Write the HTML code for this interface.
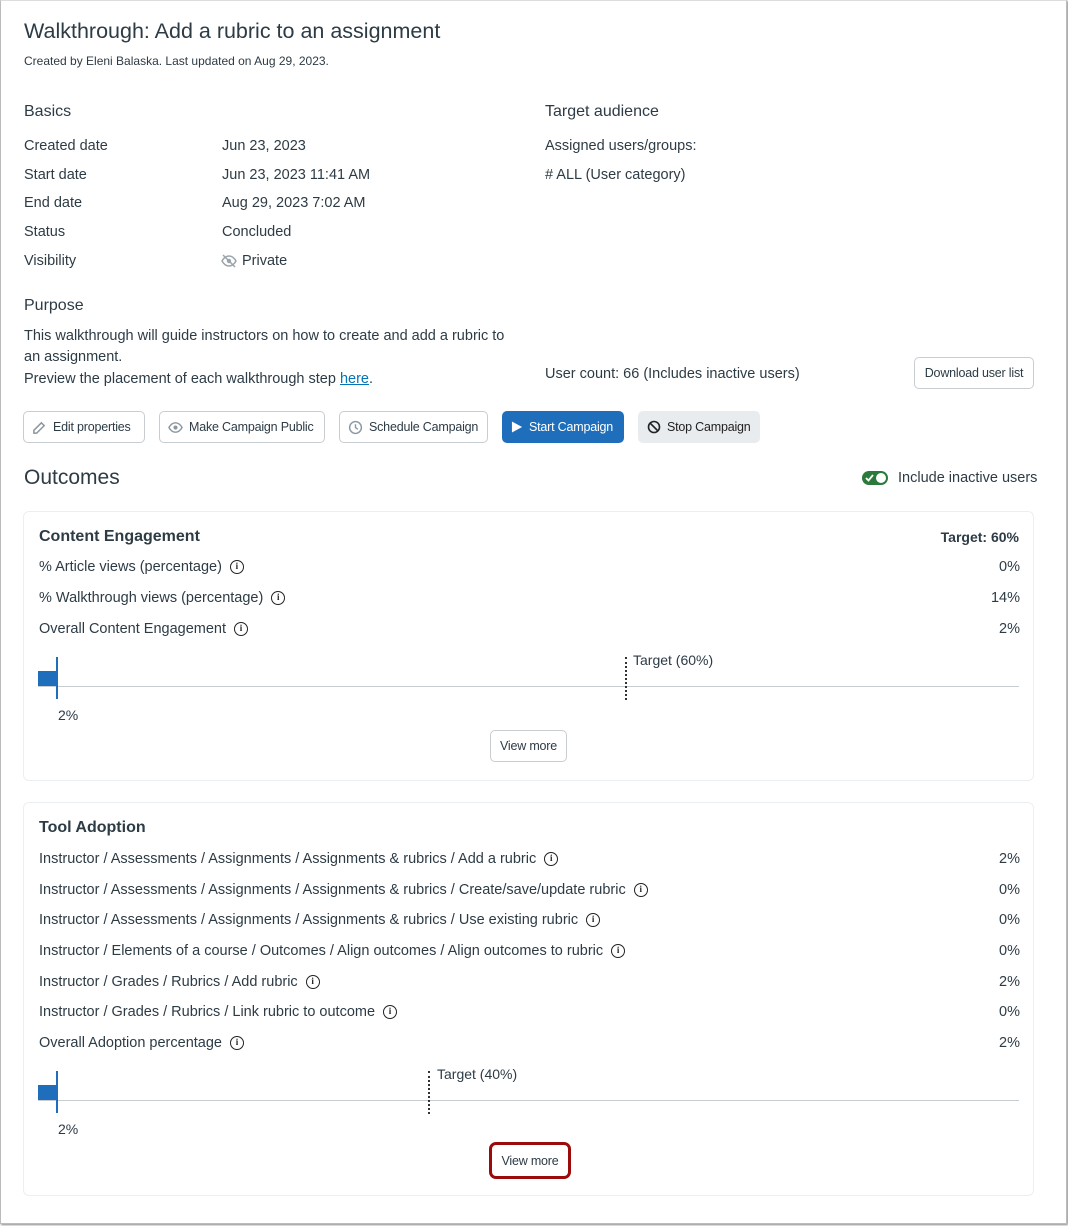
<!DOCTYPE html>
<html><head><meta charset="utf-8">
<style>
*{box-sizing:border-box;margin:0;padding:0}
body{width:1068px;height:1226px;background:#fff;font-family:"Liberation Sans",sans-serif;color:#2d3b45;position:relative;overflow:hidden}
.frame{position:absolute;left:0;top:0;width:1067px;height:1224px;border:1px solid #bbb;border-top:1px solid #ddd;box-shadow:1px 1px 2px #888}
.a{position:absolute;white-space:nowrap;line-height:1}
.t{font-size:14.5px}
.btn{position:absolute;height:32px;border:1px solid #c7cdd1;border-radius:5px;background:#fff;font-size:12.5px;letter-spacing:-0.2px;display:flex;align-items:center;padding:0 8px;gap:6px;white-space:nowrap}
.btn svg{flex-shrink:0;display:block}
.card{position:absolute;left:23px;width:1011px;border:1px solid #eceff1;border-radius:6px}
.info{display:inline-block;width:14px;height:14px;border:1.5px solid #222;border-radius:50%;font-size:9px;font-weight:bold;text-align:center;line-height:11px;margin-left:8px;vertical-align:top;margin-top:0px;font-family:"Liberation Serif",serif;color:#222}
.r{right:48px;text-align:right}
</style></head><body>
<div class="frame"></div>
<div class="a" style="left:24px;top:21px;font-size:21.5px">Walkthrough: Add a rubric to an assignment</div>
<div class="a" style="left:24px;top:55px;font-size:12px">Created by Eleni Balaska. Last updated on Aug 29, 2023.</div>

<div class="a" style="left:24px;top:104px;font-size:16px">Basics</div>
<div class="a t" style="left:24px;top:139px">Created date</div><div class="a t" style="left:222px;top:139px">Jun 23, 2023</div>
<div class="a t" style="left:24px;top:168px">Start date</div><div class="a t" style="left:222px;top:168px">Jun 23, 2023 11:41 AM</div>
<div class="a t" style="left:24px;top:196px">End date</div><div class="a t" style="left:222px;top:196px">Aug 29, 2023 7:02 AM</div>
<div class="a t" style="left:24px;top:225px">Status</div><div class="a t" style="left:222px;top:225px">Concluded</div>
<div class="a t" style="left:24px;top:254px">Visibility</div>
<svg class="a" style="left:221px;top:253px" width="16" height="16" viewBox="0 0 16 16"><path d="M1 8c2-3.5 4.5-5 7-5s5 1.5 7 5c-2 3.5-4.5 5-7 5s-5-1.5-7-5z" fill="none" stroke="#9aa4ab" stroke-width="1.5"/><circle cx="8" cy="8" r="2.2" fill="#9aa4ab"/><path d="M2 2l12 12" stroke="#9aa4ab" stroke-width="1.5"/></svg>
<div class="a t" style="left:242px;top:254px">Private</div>

<div class="a" style="left:545px;top:104px;font-size:16px">Target audience</div>
<div class="a t" style="left:545px;top:139px">Assigned users/groups:</div>
<div class="a t" style="left:545px;top:168px"># ALL (User category)</div>

<div class="a" style="left:24px;top:298px;font-size:16px">Purpose</div>
<div class="a t" style="left:24px;top:329px">This walkthrough will guide instructors on how to create and add a rubric to</div>
<div class="a t" style="left:24px;top:350px">an assignment.</div>
<div class="a t" style="left:24px;top:372px">Preview the placement of each walkthrough step <span style="color:#0374b5;text-decoration:underline">here</span>.</div>
<div class="a t" style="left:545px;top:367px">User count: 66 (Includes inactive users)</div>
<div class="btn" style="left:914px;top:357px;width:120px;justify-content:center;padding:0">Download user list</div>

<div class="btn" style="left:23px;top:411px;width:122px"><svg width="15" height="15" viewBox="0 0 16 16"><path d="M2 11l8-8 3 3-8 8H2z" fill="none" stroke="#8b969e" stroke-width="1.6"/></svg>Edit properties</div>
<div class="btn" style="left:159px;top:411px;width:166px"><svg width="15" height="15" viewBox="0 0 16 16"><path d="M1 8c2-3.5 4.5-5 7-5s5 1.5 7 5c-2 3.5-4.5 5-7 5s-5-1.5-7-5z" fill="none" stroke="#8b969e" stroke-width="1.5"/><circle cx="8" cy="8" r="2.2" fill="#8b969e"/></svg>Make Campaign Public</div>
<div class="btn" style="left:339px;top:411px;width:149px"><svg width="15" height="15" viewBox="0 0 16 16"><circle cx="8" cy="8" r="6.3" fill="none" stroke="#8b969e" stroke-width="1.5"/><path d="M8 4.5V8l2.5 2" fill="none" stroke="#8b969e" stroke-width="1.5"/></svg>Schedule Campaign</div>
<div class="btn" style="left:502px;top:411px;width:122px;background:#1e6ebc;border-color:#1e6ebc;color:#fff"><svg width="12" height="14" viewBox="0 0 13 14"><path d="M1 1l11 6-11 6z" fill="#fff"/></svg>Start Campaign</div>
<div class="btn" style="left:638px;top:411px;width:122px;background:#e8ecef;border-color:#e8ecef;color:#222"><svg width="14" height="14" viewBox="0 0 14 14"><circle cx="7" cy="7" r="5.5" fill="none" stroke="#222" stroke-width="1.6"/><path d="M3 3l8 8" stroke="#222" stroke-width="1.6"/></svg>Stop Campaign</div>

<div class="a" style="left:24px;top:467px;font-size:21px">Outcomes</div>
<div class="a" style="left:862px;top:471px;width:26px;height:14px;border-radius:7px;background:#2b7a3b"><div style="position:absolute;right:2px;top:2px;width:10px;height:10px;border-radius:50%;background:#fff"></div><svg style="position:absolute;left:3px;top:3px" width="9" height="8" viewBox="0 0 9 8"><path d="M1 4l2.5 2.5L8 1" fill="none" stroke="#fff" stroke-width="1.8"/></svg></div>
<div class="a t" style="left:898px;top:471px">Include inactive users</div>

<div class="card" style="top:511px;height:270px"></div>
<div class="a" style="left:39px;top:529px;font-size:16px;font-weight:bold">Content Engagement</div>
<div class="a t" style="right:49px;top:530px;font-weight:bold;font-size:14px">Target: 60%</div>
<div class="a t" style="left:39px;top:560px">% Article views (percentage)<span class="info">i</span></div><div class="a t r" style="top:560px">0%</div>
<div class="a t" style="left:39px;top:591px">% Walkthrough views (percentage)<span class="info">i</span></div><div class="a t r" style="top:591px">14%</div>
<div class="a t" style="left:39px;top:622px">Overall Content Engagement<span class="info">i</span></div><div class="a t r" style="top:622px">2%</div>
<div class="a" style="left:38px;top:686px;width:981px;height:1px;background:#c7cdd1"></div>
<div class="a" style="left:38px;top:671px;width:19px;height:15px;background:#1e6ebc"></div>
<div class="a" style="left:56px;top:657px;width:2px;height:42px;background:#1e6ebc"></div>
<div class="a" style="left:625px;top:657px;height:43px;border-left:2px dotted #333"></div>
<div class="a t" style="left:633px;top:653px;font-size:14px">Target (60%)</div>
<div class="a t" style="left:58px;top:708px;font-size:14px">2%</div>
<div class="btn" style="left:490px;top:730px;width:77px;justify-content:center;padding:0">View more</div>

<div class="card" style="top:802px;height:394px"></div>
<div class="a" style="left:39px;top:820px;font-size:16px;font-weight:bold">Tool Adoption</div>
<div class="a t" style="left:39px;top:852px">Instructor / Assessments / Assignments / Assignments &amp; rubrics / Add a rubric<span class="info">i</span></div><div class="a t r" style="top:852px">2%</div>
<div class="a t" style="left:39px;top:883px">Instructor / Assessments / Assignments / Assignments &amp; rubrics / Create/save/update rubric<span class="info">i</span></div><div class="a t r" style="top:883px">0%</div>
<div class="a t" style="left:39px;top:913px">Instructor / Assessments / Assignments / Assignments &amp; rubrics / Use existing rubric<span class="info">i</span></div><div class="a t r" style="top:913px">0%</div>
<div class="a t" style="left:39px;top:944px">Instructor / Elements of a course / Outcomes / Align outcomes / Align outcomes to rubric<span class="info">i</span></div><div class="a t r" style="top:944px">0%</div>
<div class="a t" style="left:39px;top:975px">Instructor / Grades / Rubrics / Add rubric<span class="info">i</span></div><div class="a t r" style="top:975px">2%</div>
<div class="a t" style="left:39px;top:1005px">Instructor / Grades / Rubrics / Link rubric to outcome<span class="info">i</span></div><div class="a t r" style="top:1005px">0%</div>
<div class="a t" style="left:39px;top:1036px">Overall Adoption percentage<span class="info">i</span></div><div class="a t r" style="top:1036px">2%</div>
<div class="a" style="left:38px;top:1100px;width:981px;height:1px;background:#c7cdd1"></div>
<div class="a" style="left:38px;top:1085px;width:19px;height:15px;background:#1e6ebc"></div>
<div class="a" style="left:56px;top:1071px;width:2px;height:42px;background:#1e6ebc"></div>
<div class="a" style="left:428px;top:1071px;height:43px;border-left:2px dotted #333"></div>
<div class="a t" style="left:437px;top:1067px;font-size:14px">Target (40%)</div>
<div class="a t" style="left:58px;top:1122px;font-size:14px">2%</div>
<div class="btn" style="left:489px;top:1142px;width:82px;height:37px;justify-content:center;padding:0;border:3px solid #9b0b0b;border-radius:7px">View more</div>
</body></html>
